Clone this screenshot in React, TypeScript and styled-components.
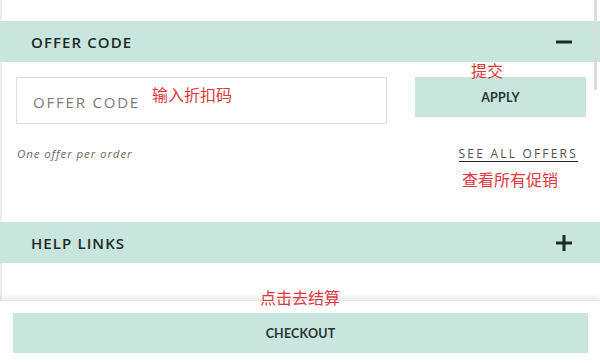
import React from "react";
import styled, { createGlobalStyle } from "styled-components";

const GlobalStyle = createGlobalStyle`
    * { box-sizing: border-box; }
    body {
        margin: 0;
        background: #ffffff;
        font-family: "Lato", "Open Sans", sans-serif;
    }
`;

const Page = styled.div`
    position: relative;
    width: 600px;
    height: 363px;
    overflow: hidden;
    display: flex;
    flex-direction: column;
    background: #ffffff;
`;

const ScrollThumb = styled.div`
    position: absolute;
    top: 0;
    right: 3px;
    width: 3px;
    height: 90px;
    background: #dcdcdc;
`;

const Content = styled.div`
    flex: 1;
    display: flex;
    flex-direction: column;
    padding-top: 21px;
    border-left: 2px solid #ececec;
`;

const SectionHeader = styled.div`
    display: flex;
    align-items: center;
    justify-content: space-between;
    height: 41px;
    margin-left: -2px;
    padding: 0 28px 0 31px;
    background: #c8e6de;
`;

const SectionTitle = styled.h3`
    margin: 0;
    font-family: "Open Sans", sans-serif;
    font-size: 15px;
    font-weight: 600;
    letter-spacing: 1.1px;
    color: #1d2a27;
`;

const ToggleIcon = styled.svg`
    width: 16px;
    height: 16px;
    display: block;
`;

const SectionBody = styled.div<{ $height: number }>`
    height: ${(p) => p.$height}px;
    padding: 15px 14px 0 14px;
`;

const CodeRow = styled.div`
    display: grid;
    grid-template-columns: 371px 171px;
    justify-content: space-between;
    align-items: start;
`;

const CodeInput = styled.input`
    height: 47px;
    width: 100%;
    border: 1px solid #dedede;
    padding: 2px 16px 0 16px;
    font-family: "Open Sans", sans-serif;
    font-size: 15px;
    letter-spacing: 1.8px;
    color: #333;
    outline: none;
    &::placeholder {
        color: #7a7a7a;
    }
`;

const ActionButton = styled.button`
    height: 40px;
    width: 100%;
    border: none;
    background: #c8e6de;
    font-family: "Lato", sans-serif;
    font-weight: 700;
    font-size: 12.5px;
    color: #2a3431;
    letter-spacing: 0.2px;
    cursor: pointer;
`;

const NoteRow = styled.div`
    display: flex;
    justify-content: space-between;
    align-items: flex-start;
    margin-top: 22px;
    padding: 0 8px 0 1px;
`;

const Note = styled.span`
    font-family: "Open Sans", sans-serif;
    font-style: italic;
    font-size: 11.5px;
    color: #6a6a6a;
    letter-spacing: 0.9px;
`;

const OffersLink = styled.a`
    font-family: "Open Sans", sans-serif;
    font-size: 12px;
    letter-spacing: 2.2px;
    color: #505050;
    text-decoration: none;
    border-bottom: 1.5px solid #222;
    line-height: 15px;
`;

const Footer = styled.div`
    height: 63px;
    padding: 12px 12px 10px 13px;
    background: #ffffff;
    box-shadow: 0 -3px 5px rgba(0, 0, 0, 0.08);
    border-top: 1px solid #e6e6e6;
`;

const Annotation = styled.span<{ $x: number; $y: number }>`
    position: absolute;
    left: ${(p) => p.$x}px;
    top: ${(p) => p.$y}px;
    font-family: "Noto Sans CJK SC", sans-serif;
    font-size: 16px;
    line-height: 18px;
    color: #e0373d;
    white-space: nowrap;
    z-index: 2;
`;

function Minus() {
    return (
        <ToggleIcon viewBox="0 0 16 16">
            <rect x="0" y="6.5" width="16" height="3" fill="#1d2a27" />
        </ToggleIcon>
    );
}

function Plus() {
    return (
        <ToggleIcon viewBox="0 0 16 16">
            <rect x="0" y="6.5" width="16" height="3" fill="#1d2a27" />
            <rect x="6.5" y="0" width="3" height="16" fill="#1d2a27" />
        </ToggleIcon>
    );
}

export default function App() {
    return (
        <>
            <GlobalStyle />
            <Page>
                <Content>
                    <SectionHeader>
                        <SectionTitle>OFFER CODE</SectionTitle>
                        <Minus />
                    </SectionHeader>
                    <SectionBody $height={160}>
                        <CodeRow>
                            <CodeInput placeholder="OFFER CODE" />
                            <ActionButton>APPLY</ActionButton>
                        </CodeRow>
                        <NoteRow>
                            <Note>One offer per order</Note>
                            <OffersLink href="#">SEE ALL OFFERS</OffersLink>
                        </NoteRow>
                    </SectionBody>
                    <SectionHeader>
                        <SectionTitle>HELP LINKS</SectionTitle>
                        <Plus />
                    </SectionHeader>
                </Content>
                <Footer>
                    <ActionButton>CHECKOUT</ActionButton>
                </Footer>
                <ScrollThumb />
                <Annotation $x={152} $y={85}>输入折扣码</Annotation>
                <Annotation $x={471} $y={61}>提交</Annotation>
                <Annotation $x={462} $y={170}>查看所有促销</Annotation>
                <Annotation $x={260} $y={288}>点击去结算</Annotation>
            </Page>
        </>
    );
}
